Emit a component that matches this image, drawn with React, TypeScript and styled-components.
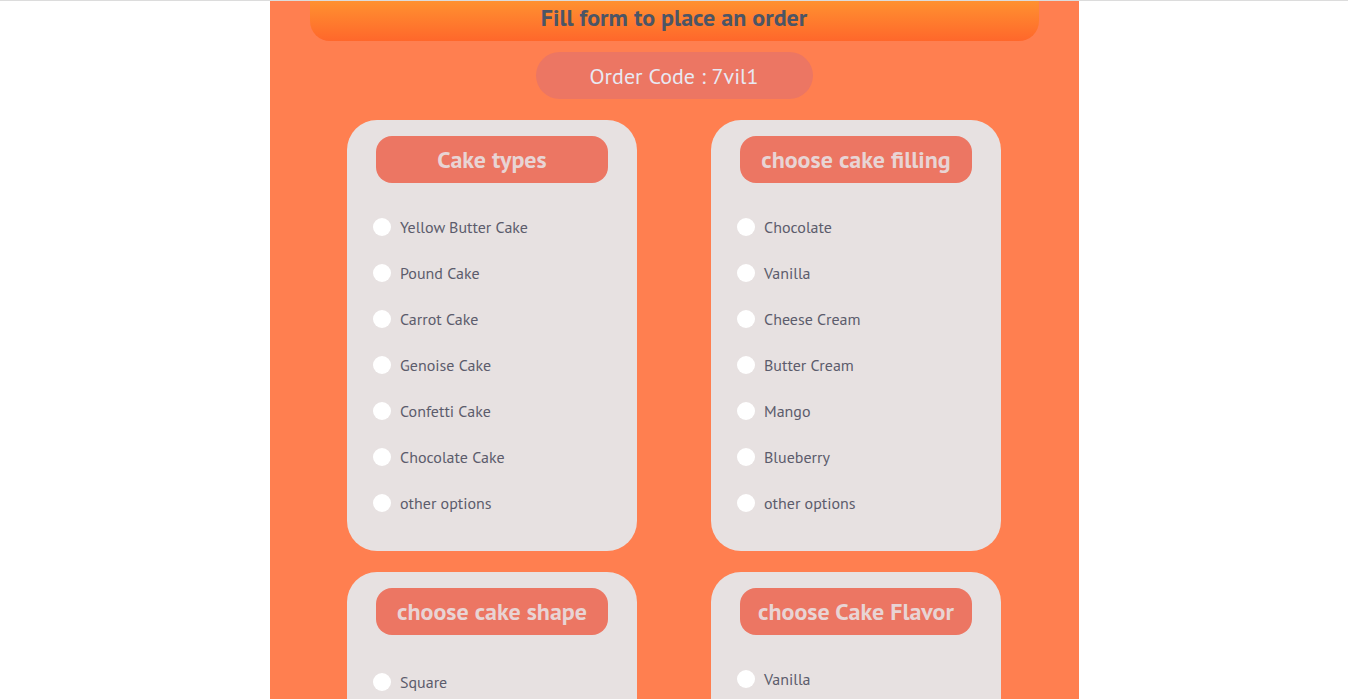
import React from 'react';
import styled, { createGlobalStyle } from 'styled-components';

const GlobalStyle = createGlobalStyle`
  html, body {
    margin: 0;
    padding: 0;
    background: #fff;
    font-family: 'PT Sans', Lato, 'Liberation Sans', sans-serif;
    overflow: hidden;
  }
`;

const sections = [
  {
    title: 'Cake types',
    options: ['Yellow Butter Cake', 'Pound Cake', 'Carrot Cake', 'Genoise Cake', 'Confetti Cake', 'Chocolate Cake', 'other options'],
  },
  {
    title: 'choose cake filling',
    options: ['Chocolate', 'Vanilla', 'Cheese Cream', 'Butter Cream', 'Mango', 'Blueberry', 'other options'],
  },
  {
    title: 'choose cake shape',
    options: ['Square', 'Round', 'Heart', 'Rectangle'],
    spacing: 24,
  },
  {
    title: 'choose Cake Flavor',
    options: ['Vanilla', 'Chocolate', 'Strawberry', 'Lemon'],
  },
];

const App: React.FC = () => (
  <Page>
    <GlobalStyle />
    <Panel>
      <Header>Fill form to place an order</Header>
      <CodePill>Order Code : 7vil1</CodePill>
      <CardGrid>
        {sections.map((s, i) => (
          <Card key={s.title}>
            <CardTitle>{s.title}</CardTitle>
            <OptionList $spacing={s.spacing}>
              {s.options.map((o) => (
                <Option key={o}>
                  <Radio type="radio" name={'group' + i} value={o} />
                  <OptionLabel>{o}</OptionLabel>
                </Option>
              ))}
            </OptionList>
          </Card>
        ))}
      </CardGrid>
    </Panel>
  </Page>
);

const Page = styled.div`
  border-top: 1px solid #dcdcdc;
  height: 698px;
  overflow: hidden;
`;

const Panel = styled.div`
  width: 809px;
  margin: 0 auto;
  min-height: 100%;
  background: #ff7f50;
  display: flex;
  flex-direction: column;
  align-items: center;
`;

const Header = styled.div`
  width: 729px;
  height: 40px;
  box-sizing: border-box;
  padding-bottom: 8px;
  display: flex;
  align-items: center;
  justify-content: center;
  border-radius: 0 0 20px 20px;
  background: linear-gradient(to bottom, #ff9130, #ff672b);
  color: #4b5566;
  font-size: 24px;
  font-weight: 700;
`;

const CodePill = styled.div`
  margin-top: 11px;
  width: 277px;
  height: 47px;
  border-radius: 24px;
  background: #ec7663;
  color: #e8e8f2;
  font-size: 22px;
  display: flex;
  align-items: center;
  justify-content: center;
`;

const CardGrid = styled.div`
  margin-top: 21px;
  display: grid;
  grid-template-columns: 290px 290px;
  column-gap: 74px;
  row-gap: 21px;
`;

const Card = styled.div`
  background: #e7e1e1;
  border-radius: 30px;
  padding: 16px 0 25px;
  display: flex;
  flex-direction: column;
  align-items: center;
`;

const CardTitle = styled.div`
  width: 232px;
  height: 47px;
  flex-shrink: 0;
  border-radius: 16px;
  background: #ec7663;
  color: #e8d4d4;
  font-size: 24px;
  font-weight: 700;
  display: flex;
  align-items: center;
  justify-content: center;
`;

const OptionList = styled.div<{ $spacing?: number }>`
  margin-top: ${({ $spacing }) => $spacing ?? 21}px;
  align-self: stretch;
  display: flex;
  flex-direction: column;
`;

const Option = styled.label`
  height: 46px;
  display: flex;
  align-items: center;
  padding-left: 26px;
`;

const Radio = styled.input`
  appearance: none;
  margin: 0;
  width: 18px;
  height: 18px;
  border-radius: 50%;
  background: #fff;
  flex-shrink: 0;
`;

const OptionLabel = styled.span`
  margin-left: 9px;
  font-size: 16px;
  color: #5c5c6c;
`;

export default App;
